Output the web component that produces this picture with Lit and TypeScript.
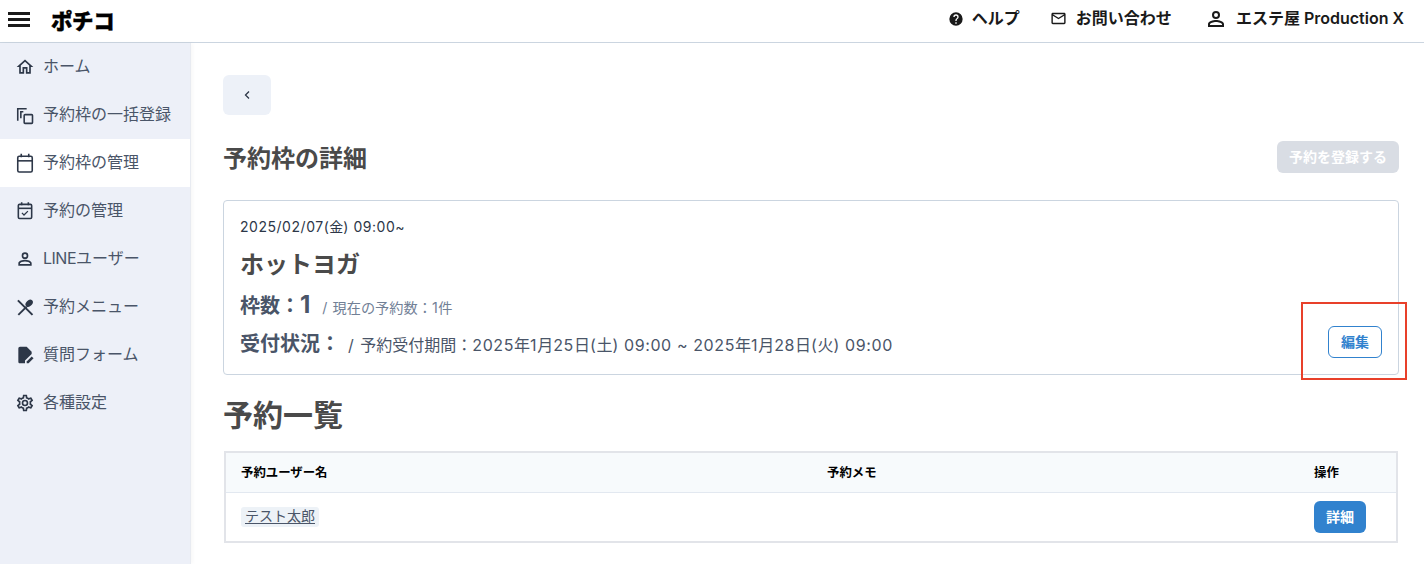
import { LitElement, html, css, svg } from "lit";
import { customElement } from "lit/decorators.js";

const ic = (body: unknown, size = 20) => html`<svg class="ic" width=${size} height=${size} viewBox="0 0 24 24" fill="currentColor">${body}</svg>`;

const lat = (text: string) =>
  text.split(/([\x20-\x7e]+)/).map((part, i) => (i % 2 ? html`<span class="lat">${part}</span>` : part));

const icons = {
  home: svg`<path d="M12 5.690l5 4.500V18h-2v-6H9v6H7v-7.810l5-4.500M12 3L2 12h3v8h6v-6h2v6h6v-8h3L12 3z"/>`,
  copy: svg`<g fill="none" stroke="currentColor" stroke-width="1.900"><path d="M3.300 19V4.500H14"/><path d="M7 16V8h3"/><rect x="11" y="11.500" width="10" height="10.500" rx="1"/></g>`,
  calendar: svg`<g fill="none" stroke="currentColor" stroke-width="1.900"><rect x="3.300" y="3.800" width="17.400" height="19" rx="1.800"/><path d="M3 9.400h18"/><path d="M7.500 1v4M16.500 1v4"/></g>`,
  calcheck: svg`<g fill="none" stroke="currentColor" stroke-width="1.900"><rect x="4" y="4" width="16" height="17" rx="1.500"/><path d="M4 8.800h16"/><path d="M8 1.500v3.500M16 1.500v3.500"/><path d="M8.300 14.300l2.500 2.500 4.700-4.700" stroke-width="1.500"/></g>`,
  person: svg`<path d="M12 6a2 2 0 1 1 0 4 2 2 0 0 1 0-4m0 9c2.700 0 5.800 1.290 6 2v1H6v-.990c.2-.720 3.300-2.010 6-2.010M12 4a4 4 0 1 0 0 8 4 4 0 0 0 0-8zm0 9c-2.670 0-8 1.340-8 4v3h16v-3c0-2.660-5.330-4-8-4z"/>`,
  food: svg`<path d="M4 21.500L14 11.500" fill="none" stroke="currentColor" stroke-width="2.300"/><path d="M3.500 4l17.500 17.500" fill="none" stroke="currentColor" stroke-width="2.400"/><ellipse cx="17" cy="7.500" rx="3.600" ry="5" transform="rotate(45 17 7.500)"/>`,
  form: svg`<path d="M14 2H6a2 2 0 0 0-2 2v16c0 1.100.9 2 2 2h6v-3.300l8-8V8l-6-6z"/><path d="M14 22v-2.300l6-6 2.300 2.300-6 6z"/>`,
  gear: svg`<path d="M19.430 12.980c.04-.32.070-.64.070-.98s-.03-.66-.07-.98l2.110-1.650c.19-.15.24-.42.120-.64l-2-3.460c-.12-.22-.39-.3-.61-.22l-2.490 1c-.52-.4-1.080-.73-1.690-.98l-.38-2.650A.49.490 0 0 0 14 2h-4c-.25 0-.46.180-.49.420l-.38 2.650c-.61.250-1.170.590-1.690.980l-2.490-1a.57.570 0 0 0-.61.220l-2 3.460c-.13.220-.07.490.12.640l2.110 1.650c-.04.320-.07.650-.07.980s.03.660.07.980l-2.110 1.650c-.19.150-.24.420-.12.640l2 3.460c.12.220.39.300.61.220l2.490-1c.52.400 1.080.730 1.690.980l.38 2.650c.03.240.24.420.49.420h4c.25 0 .46-.18.490-.42l.38-2.650c.61-.25 1.170-.59 1.690-.98l2.490 1c.23.090.49 0 .61-.22l2-3.460c.12-.22.07-.49-.12-.64l-2.110-1.650zm-1.980-1.710c.04.310.05.520.05.730s-.02.430-.05.730l-.14 1.130.89.700 1.080.840-.7 1.210-1.270-.51-1.040-.42-.9.680c-.43.320-.84.560-1.250.730l-1.060.430-.16 1.130-.2 1.350h-1.400l-.19-1.350-.16-1.130-1.060-.43c-.43-.18-.83-.41-1.230-.71l-.91-.7-1.060.43-1.270.51-.7-1.210 1.080-.84.890-.7-.14-1.130c-.03-.31-.05-.54-.05-.74s.02-.43.05-.73l.14-1.130-.89-.7-1.080-.84.7-1.210 1.270.51 1.040.42.900-.68c.43-.32.840-.56 1.250-.73l1.060-.43.160-1.130.2-1.350h1.390l.19 1.350.16 1.130 1.060.43c.43.180.83.410 1.230.71l.91.7 1.060-.43 1.270-.51.7 1.210-1.070.85-.89.7.14 1.130zM12 8a4 4 0 1 0 0 8 4 4 0 0 0 0-8zm0 6a2 2 0 1 1 0-4 2 2 0 0 1 0 4z"/>`,
  help: svg`<path d="M12 2a10 10 0 1 0 0 20 10 10 0 0 0 0-20zm1 17h-2v-2h2v2zm2.070-7.750l-.9.920C13.450 12.900 13 13.500 13 15h-2v-.5c0-1.100.45-2.100 1.170-2.830l1.240-1.260c.37-.36.590-.86.590-1.410a2 2 0 0 0-4 0H8a4 4 0 0 1 8 0c0 .88-.36 1.680-.93 2.250z"/>`,
  mail: svg`<path d="M22 6c0-1.100-.9-2-2-2H4c-1.100 0-2 .9-2 2v12c0 1.100.9 2 2 2h16c1.100 0 2-.9 2-2V6zm-2 0l-8 5-8-5h16zm0 12H4V8l8 5 8-5v10z"/>`,
};

const nav: [keyof typeof icons, unknown][] = [
  ["home", "ホーム"],
  ["copy", "予約枠の一括登録"],
  ["calendar", "予約枠の管理"],
  ["calcheck", "予約の管理"],
  ["person", html`<span class="tight">LINE</span>ユーザー`],
  ["food", "予約メニュー"],
  ["form", "質問フォーム"],
  ["gear", "各種設定"],
];

@customElement("app-root")
export class AppRoot extends LitElement {
  static styles = css`
    :host {
      display: block;
      width: 1424px;
      height: 564px;
      overflow: hidden;
      position: relative;
      background: #fff;
      font-family: Inter, "Noto Sans CJK JP", sans-serif;
      color: #2d3748;
    }
    * { box-sizing: border-box; }
    .ic { display: block; flex: none; }
    .lat { letter-spacing: 0.038em; }
    .tight { letter-spacing: -0.5px; }
    header {
      height: 43px;
      border-bottom: 1px solid #cbd5e0;
      display: flex;
      align-items: center;
      padding: 0 20px 3px 8px;
      color: #000;
    }
    .burger { display: flex; flex-direction: column; gap: 3px; width: 22px; }
    .burger span { height: 3px; background: #1a1a1a; display: block; }
    .logo {
      margin-left: 21px;
      padding-top: 2px;
      font-size: 21.500px;
      font-weight: 900;
      letter-spacing: -0.4px;
      line-height: 24px;
      color: #000;
      -webkit-text-stroke: 0.4px #000;
    }
    .top { margin-left: auto; display: flex; align-items: center; padding-bottom: 5px; }
    .top a { display: flex; align-items: center; font-size: 16px; font-weight: 600; color: #1a1a1a; }
    .top .ic { margin-top: 3px; }
    .help { gap: 8px; margin-right: 30px; }
    .mail { gap: 9px; margin-right: 32px; }
    .user { gap: 8px; }
    .body { display: flex; height: 521px; }
    aside {
      width: 191px;
      flex: none;
      background: #edf0f8;
      border-right: 1px solid #e8ebf1;
      box-shadow: 2px 0 4px rgba(0, 0, 0, 0.03);
      font-size: 16px;
      color: #4a5568;
    }
    .item { height: 48px; display: flex; align-items: center; padding-left: 15px; gap: 8px; color: #4a5568; }
    .item .ic { color: #2d3748; }
    .item .lbl { padding-bottom: 4px; }
    .item.on { background: #fff; }
    main { flex: 1; min-width: 0; padding: 32px 25px 0 32px; }
    .back {
      width: 48px; height: 40px; border-radius: 6px; background: #edf1f8;
      display: flex; align-items: center; justify-content: center; color: #2d3748;
    }
    .headrow { display: flex; align-items: center; justify-content: space-between; margin-top: 26px; height: 32px; }
    h1 { margin: 0; padding-top: 4px; font-size: 24px; font-weight: 700; color: #4a4a4a; line-height: 32px; }
    .reg {
      width: 122px; height: 32px; border-radius: 6px; background: #d9dde4; color: #fff; padding-bottom: 2px;
      font-size: 14px; font-weight: 700; display: flex; align-items: center; justify-content: center;
    }
    .card {
      margin-top: 27px; height: 175px; border: 1px solid #cbd5e0; border-radius: 4px;
      padding: 16px; position: relative; color: #4a5568;
    }
    .date { font-size: 14px; line-height: 20px; color: #2d3748; }
    .name { font-size: 24px; font-weight: 700; color: #4a4a4a; line-height: 32px; margin-top: 12px; }
    .line { display: flex; align-items: center; margin-top: 8px; height: 32px; }
    .line.first { margin-top: 7px; }
    .big { font-size: 20px; font-weight: 700; color: #4a5568; line-height: 32px; }
    .big b { font-size: 24px; font-weight: 700; }
    .first .big { padding-top: 3px; }
    .small { font-size: 14.200px; color: #718096; margin-left: 12px; padding-top: 6px; }
    .mid { font-size: 16px; color: #4a5568; margin-left: 8px; }
    .mid .slash { margin-right: 2px; }
    .edit {
      position: absolute; right: 16px; bottom: 16px; width: 54px; height: 32px; padding-bottom: 3px;
      border: 1px solid #3182ce; border-radius: 6px; color: #3182ce; background: #fff;
      font-size: 14px; font-weight: 700; display: flex; align-items: center; justify-content: center;
    }
    h2 { margin: 20px 0 0; font-size: 30px; font-weight: 700; color: #4a4a4a; line-height: 40px; }
    .table {
      margin: 16px 1px 0; border: 2px solid #e2e4e9;
      display: grid; grid-template-columns: 601px 1fr 82px; font-size: 12.400px;
    }
    .th {
      height: 40px; background: #f7fafc; border-bottom: 1px solid #e2e8f0; display: flex; align-items: center;
      font-weight: 700; color: #000; padding: 0 0 2px 15px;
    }
    .th.c2, .th.ops { padding-left: 0; }
    .td { height: 48px; display: flex; align-items: center; padding-left: 15px; }
    .user-name {
      background: #edf2f7; border-radius: 3px; padding: 0 4px 2px; font-size: 14px; line-height: 18px;
      color: #4a5568; text-decoration: underline; text-underline-offset: 2px;
    }
    .detail {
      width: 52px; height: 32px; border-radius: 6px; background: #3182ce; color: #fff; padding-bottom: 3px;
      font-size: 14px; font-weight: 700; display: flex; align-items: center; justify-content: center;
    }
    .td.ops { padding-left: 0; }
    .mark {
      position: absolute; left: 1301px; top: 302px; width: 106px; height: 78px;
      border: 2px solid #e8402a; pointer-events: none;
    }
  `;

  render() {
    return html`
      <header>
        <div class="burger"><span></span><span></span><span></span></div>
        <div class="logo">ポチコ</div>
        <div class="top">
          <a class="help">${ic(icons.help, 16)}ヘルプ</a>
          <a class="mail">${ic(icons.mail, 17)}お問い合わせ</a>
          <a class="user">${ic(icons.person, 24)}エステ屋 Production X</a>
        </div>
      </header>
      <div class="body">
        <aside>
          ${nav.map(
            ([k, label], i) => html`<div class="item ${i === 2 ? "on" : ""}">${ic(icons[k])}<span class="lbl">${label}</span></div>`
          )}
        </aside>
        <main>
          <div class="back">
            <svg width="14" height="14" viewBox="0 0 14 14" fill="none" stroke="currentColor" stroke-width="1.300"><path d="M9 3.500L5.500 7L9 10.500"/></svg>
          </div>
          <div class="headrow">
            <h1>予約枠の詳細</h1>
            <div class="reg">予約を登録する</div>
          </div>
          <section class="card">
            <div class="date">${lat("2025/02/07(金) 09:00~")}</div>
            <div class="name">ホットヨガ</div>
            <div class="line first">
              <span class="big">枠数：<b>1</b></span><span class="small">${lat("/ 現在の予約数：1件")}</span>
            </div>
            <div class="line">
              <span class="big">受付状況：</span><span class="mid"><span class="slash">/</span> ${lat("予約受付期間：2025年1月25日(土) 09:00 ~ 2025年1月28日(火) 09:00")}</span>
            </div>
            <div class="edit">編集</div>
          </section>
          <h2>予約一覧</h2>
          <div class="table">
            <div class="th">予約ユーザー名</div>
            <div class="th c2">予約メモ</div>
            <div class="th ops">操作</div>
            <div class="td"><span class="user-name">テスト太郎</span></div>
            <div class="td"></div>
            <div class="td ops"><div class="detail">詳細</div></div>
          </div>
        </main>
      </div>
      <div class="mark"></div>
    `;
  }
}
